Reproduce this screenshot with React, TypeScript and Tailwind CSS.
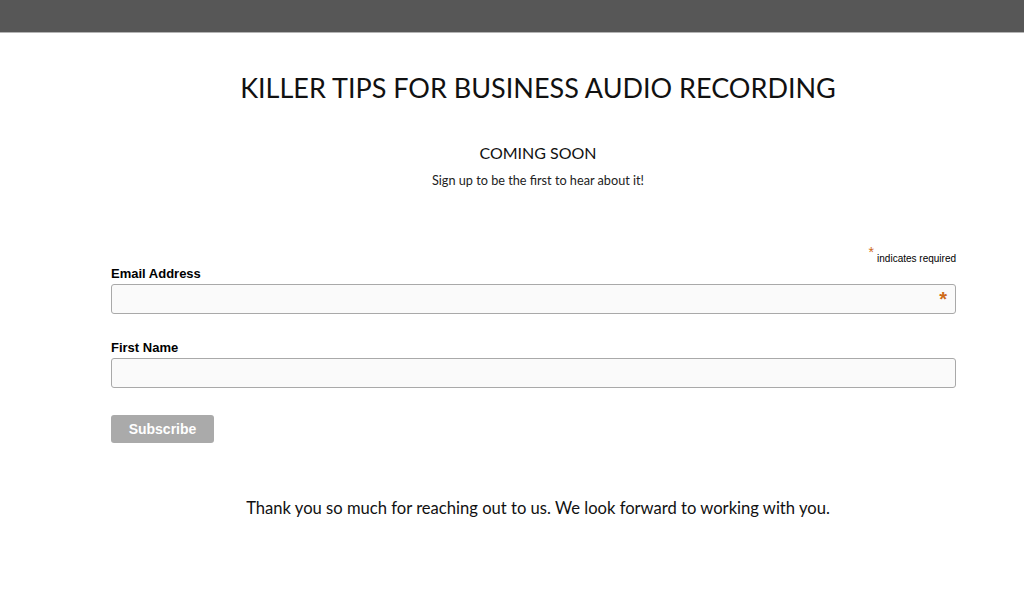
import React from "react";

export default function App() {
  const raleway = { fontFamily: "Lato, 'Noto Sans', sans-serif" };
  return (
    <div className="min-h-[615px] bg-white">
      <div className="h-[33px] bg-[#575757] border-b border-[#b4b4b4]" />
      <main className="pl-[52px] text-[#111]" style={raleway}>
        <h1 className="mt-[38px] text-center text-[27px] leading-[34px] font-normal tracking-[0px]">
          KILLER TIPS FOR BUSINESS AUDIO RECORDING
        </h1>
        <h2 className="mt-[38px] text-center text-[16px] leading-[20px] font-normal">COMING SOON</h2>
        <p className="mt-[8px] text-center text-[12.7px] leading-[18px] text-[#222]">
          Sign up to be the first to hear about it!
        </p>
        <form
          className="ml-[59px] w-[845px] mt-[61px]"
          style={{ fontFamily: "'Liberation Sans', Arial, sans-serif" }}
          onSubmit={(e) => e.preventDefault()}
        >
          <div className="text-right text-[10px] leading-[14px] text-black">
            <span className="relative -top-[5px] text-[#ce6a19] text-[14px] mr-[3px]">*</span>
            indicates required
          </div>
          <label className="block mt-[0px] text-[13px] font-bold leading-[16px] text-black">Email Address</label>
          <div className="relative mt-[2px]">
            <input className="block w-full h-[30px] rounded-[3px] border border-[#a9a9a9] bg-[#fafafa] px-2 outline-none" />
            <span className="absolute right-[9px] top-[5px] text-[#ce6a19] text-[20px] leading-[20px] font-bold">*</span>
          </div>
          <label className="block mt-[26px] text-[13px] font-bold leading-[16px] text-black">First Name</label>
          <input className="block mt-[2px] w-full h-[30px] rounded-[3px] border border-[#a9a9a9] bg-[#fafafa] px-2 outline-none" />
          <button
            type="submit"
            className="mt-[27px] w-[103px] h-[28px] rounded-[3px] bg-[#aaaaaa] text-white text-[14px] font-bold"
          >
            Subscribe
          </button>
        </form>
        <p className="mt-[54px] text-center text-[16.6px] leading-[22px] text-[#111]">
          Thank you so much for reaching out to us. We look forward to working with you.
        </p>
      </main>
    </div>
  );
}
